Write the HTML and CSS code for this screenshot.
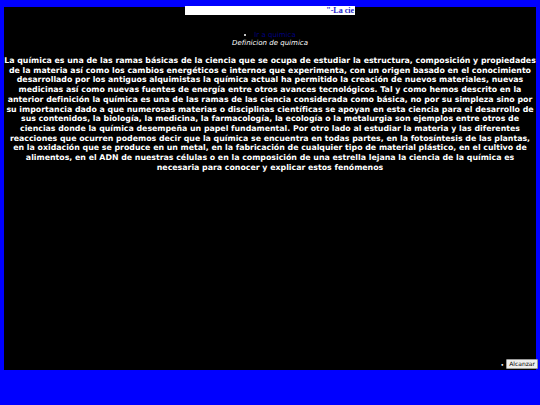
FILE: index.html
```html
<!DOCTYPE html>
<html lang="es">
<head>
    <meta charset="UTF-8">
    <title>Quimica</title>
    <link rel="stylesheet" href="styles.css">
</head>
<body>
    <div class="page">
        <div class="ticker">"-La cie</div>

        <ul class="menu">
            <li><a href="#" class="menu-link">Ir a quimica</a></li>
        </ul>
        <p class="subtitle">Definicion de quimica</p>

        <p class="definition">La química es una de las ramas básicas de la ciencia que se ocupa de estudiar la estructura, composición y propiedades de la materia así como los cambios energéticos e internos que experimenta, con un origen basado en el conocimiento desarrollado por los antiguos alquimistas la química actual ha permitido la creación de nuevos materiales, nuevas medicinas así como nuevas fuentes de energía entre otros avances tecnológicos. Tal y como hemos descrito en la anterior definición la química es una de las ramas de las ciencia considerada como básica, no por su simpleza sino por su importancia dado a que numerosas materias o disciplinas científicas se apoyan en esta ciencia para el desarrollo de sus contenidos, la biología, la medicina, la farmacología, la ecología o la metalurgia son ejemplos entre otros de ciencias donde la química desempeña un papel fundamental. Por otro lado al estudiar la materia y las diferentes reacciones que ocurren podemos decir que la química se encuentra en todas partes, en la fotosíntesis de las plantas, en la oxidación que se produce en un metal, en la fabricación de cualquier tipo de material plástico, en el cultivo de alimentos, en el ADN de nuestras células o en la composición de una estrella lejana la ciencia de la química es necesaria para conocer y explicar estos fenómenos</p>

        <div class="footer">
            <span class="dot">&bull;</span>
            <button class="reach-btn">Alcanzar</button>
        </div>
    </div>
</body>
</html>
```

FILE: styles.css
```css
* {
    box-sizing: border-box;
}

body {
    margin: 0;
    padding: 7px 4px 0;
    background-color: #0000ff;
    font-family: 'DejaVu Sans', sans-serif;
}

.page {
    height: 363px;
    background-color: #000;
    display: flex;
    flex-direction: column;
}

.ticker {
    align-self: center;
    width: 170px;
    height: 9px;
    margin-top: -1px;
    padding-right: 1px;
    background-color: #fff;
    text-align: right;
    white-space: nowrap;
    font-family: 'Liberation Serif', serif;
    font-weight: bold;
    font-size: 8px;
    line-height: 9px;
    color: #1a1acc;
}

.menu {
    margin: 16px 0 0;
    padding: 0;
    text-align: center;
    font-size: 7px;
    line-height: 8px;
    list-style-position: inside;
    color: #fff;
}

.menu-link {
    color: #000080;
    text-decoration: none;
}

.subtitle {
    margin: 0;
    text-align: center;
    font-style: italic;
    font-size: 7px;
    line-height: 9px;
    color: #fff;
}

.definition {
    margin: 8px 0 0;
    text-align: center;
    font-weight: bold;
    font-size: 7.83px;
    line-height: 9.7px;
    color: #fff;
}

.footer {
    margin-top: auto;
    margin-bottom: 1px;
    display: flex;
    justify-content: flex-end;
    align-items: center;
    gap: 2px;
}

.dot {
    color: #fff;
    font-size: 6px;
}

.reach-btn {
    margin-right: -2px;
    padding: 0 2px;
    height: 10px;
    font-family: 'DejaVu Sans', sans-serif;
    font-size: 6px;
    line-height: 8px;
    color: #000;
    background-color: #eee;
    border: 1px solid #999;
    border-radius: 1px;
}
```
